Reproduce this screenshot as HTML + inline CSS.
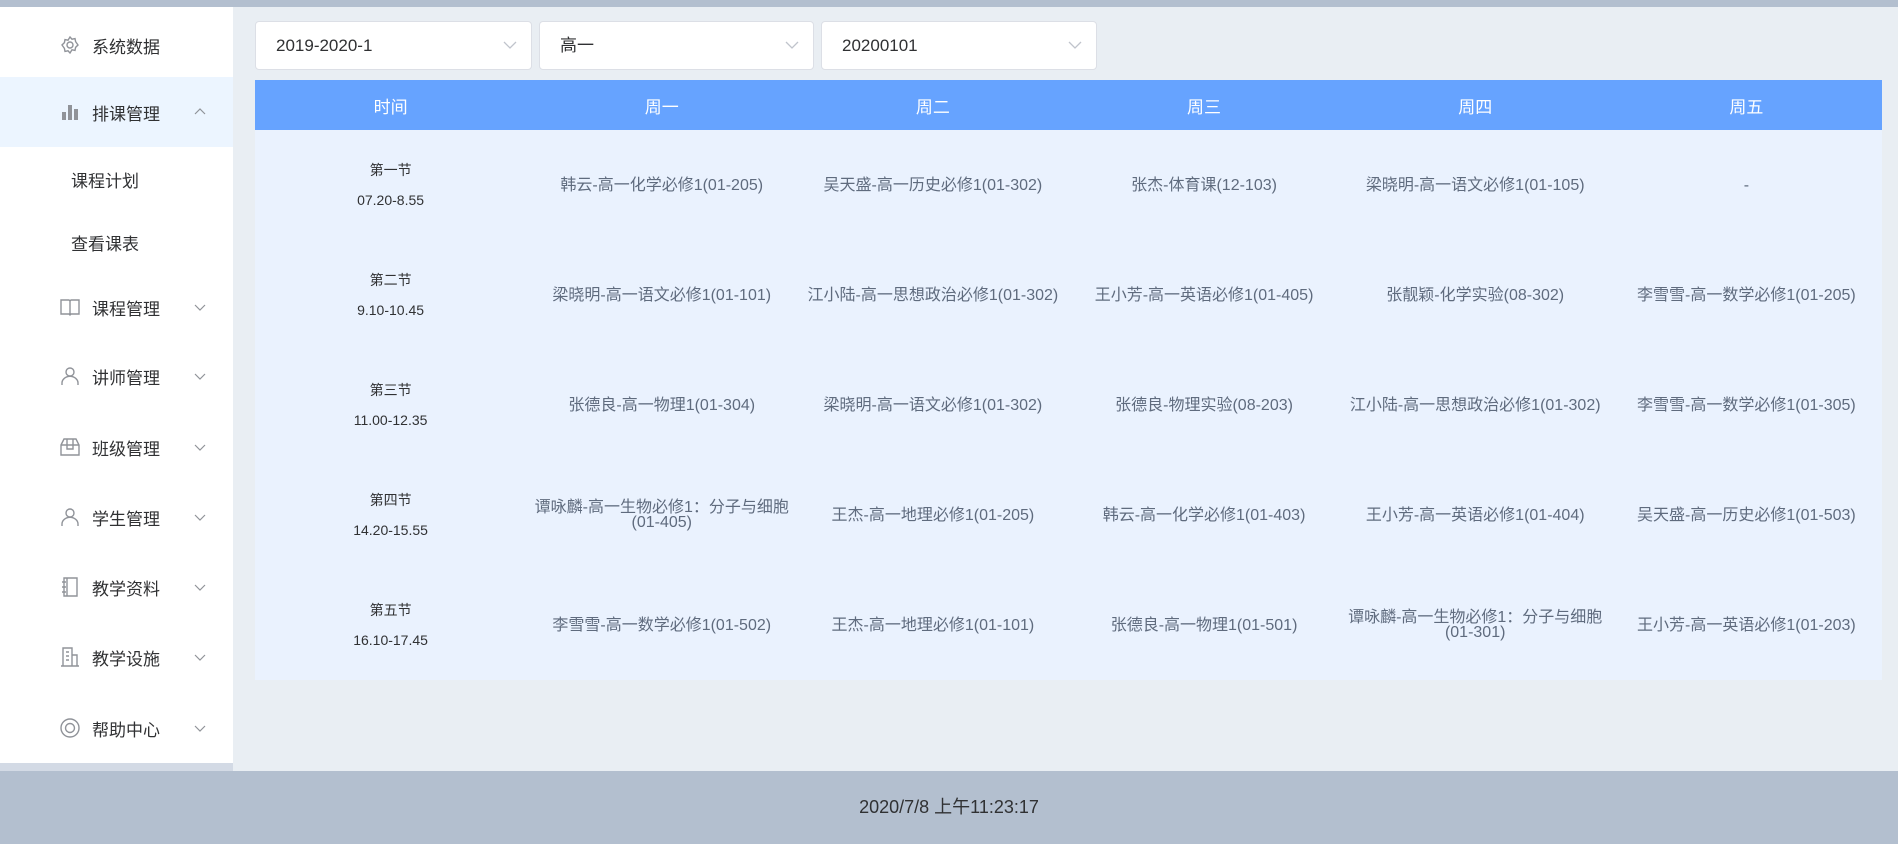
<!DOCTYPE html>
<html><head><meta charset="utf-8">
<style>
*{margin:0;padding:0;box-sizing:border-box}
body{width:1898px;height:844px;overflow:hidden;background:#e9eef3;font-family:"Liberation Sans","Noto Sans CJK SC",sans-serif;position:relative}
.top{position:absolute;left:0;top:0;width:1898px;height:7px;background:#b3bfcf}
.side{position:absolute;left:0;top:7px;width:233px;height:756px;background:#fff}
.sidestrip{position:absolute;left:0;top:763px;width:233px;height:8px;background:#d3dae5}
.item{position:absolute;left:0;width:233px;height:70px;display:flex;align-items:center;font-size:17px;color:#303133}
.item svg.ic{position:absolute;left:60px;top:50%;margin-top:-10px;width:20px;height:20px}
.item .t{position:absolute;left:92px}
.item .ar{position:absolute;left:194px;top:50%;margin-top:-5px;width:12px;height:10px}
.sub{position:absolute;left:71px;font-size:17px;color:#303133}
.foot{position:absolute;left:0;top:771px;width:1898px;height:73px;background:#b3bfcf;text-align:center;line-height:73px;font-size:18px;color:#303133}
.sel{position:absolute;top:21px;height:49px;background:#fff;border:1px solid #dcdfe6;border-radius:4px;font-size:17px;color:#303133;line-height:47px;padding-left:20px}
.sel svg{position:absolute;right:14px;top:19px}
table{position:absolute;left:255px;top:80px;width:1627px;border-collapse:collapse;table-layout:fixed}
th{height:50px;background:#66a3ff;color:#fff;font-weight:normal;font-size:17px}
td{height:110px;background:#eaf2fe;text-align:center;font-size:16px;color:#5f6b7e;line-height:15px;padding:0 6px}
td.tm{color:#303133;font-size:14px;line-height:30px}
</style></head><body>
<div class="top"></div>
<div class="side">
<div class="item" style="top:3px"><svg class="ic" viewBox="0 0 20 20" fill="none" stroke="#909399" stroke-width="1.4"><circle cx="10" cy="10" r="3"/><path d="M10 2l2 2.2 3-.6.6 3L18 10l-2.4 2.4-.6 3-3-.6L10 18l-2-2.2-3 .6-.6-3L2 10l2.4-2.4.6-3 3 .6z"/></svg><span class="t">系统数据</span></div>
<div class="item" style="top:70px;background:#ecf5ff"><svg class="ic" viewBox="0 0 20 20" fill="#909399"><rect x="2" y="10" width="4" height="8"/><rect x="8" y="3" width="4" height="15"/><rect x="14" y="7" width="4" height="11"/></svg><span class="t">排课管理</span><svg class="ar" viewBox="0 0 12 10" fill="none" stroke="#909399" stroke-width="1.2"><path d="M1 7l5-5 5 5"/></svg></div>
<div class="sub" style="top:160px">课程计划</div>
<div class="sub" style="top:223px">查看课表</div>
<div class="item" style="top:265px"><svg class="ic" viewBox="0 0 20 20" fill="none" stroke="#909399" stroke-width="1.4"><path d="M1 3h8l1 1 1-1h8v14h-8l-1 1-1-1H1zM10 4v14"/></svg><span class="t">课程管理</span><svg class="ar" viewBox="0 0 12 10" fill="none" stroke="#909399" stroke-width="1.2"><path d="M1 3l5 5 5-5"/></svg></div>
<div class="item" style="top:334px"><svg class="ic" viewBox="0 0 20 20" fill="none" stroke="#909399" stroke-width="1.4"><circle cx="10" cy="6" r="4"/><path d="M2 19v-2a6 5 0 0 1 16 0v2"/></svg><span class="t">讲师管理</span><svg class="ar" viewBox="0 0 12 10" fill="none" stroke="#909399" stroke-width="1.2"><path d="M1 3l5 5 5-5"/></svg></div>
<div class="item" style="top:405px"><svg class="ic" viewBox="0 0 20 20" fill="none" stroke="#909399" stroke-width="1.4"><path d="M1 8l3-6h12l3 6v10H1zM1 8h18M7 2v10h6V2"/></svg><span class="t">班级管理</span><svg class="ar" viewBox="0 0 12 10" fill="none" stroke="#909399" stroke-width="1.2"><path d="M1 3l5 5 5-5"/></svg></div>
<div class="item" style="top:475px"><svg class="ic" viewBox="0 0 20 20" fill="none" stroke="#909399" stroke-width="1.4"><circle cx="10" cy="6" r="4"/><path d="M2 19v-2a6 5 0 0 1 16 0v2"/></svg><span class="t">学生管理</span><svg class="ar" viewBox="0 0 12 10" fill="none" stroke="#909399" stroke-width="1.2"><path d="M1 3l5 5 5-5"/></svg></div>
<div class="item" style="top:545px"><svg class="ic" viewBox="0 0 20 20" fill="none" stroke="#909399" stroke-width="1.4"><path d="M4 1h13v18H4zM7 1v18M2 5h4M2 10h4M2 15h4"/></svg><span class="t">教学资料</span><svg class="ar" viewBox="0 0 12 10" fill="none" stroke="#909399" stroke-width="1.2"><path d="M1 3l5 5 5-5"/></svg></div>
<div class="item" style="top:615px"><svg class="ic" viewBox="0 0 20 20" fill="none" stroke="#909399" stroke-width="1.4"><path d="M1 19h18M3 19V1h9v18M12 8h5v11M6 5h3M6 9h3M6 13h3"/></svg><span class="t">教学设施</span><svg class="ar" viewBox="0 0 12 10" fill="none" stroke="#909399" stroke-width="1.2"><path d="M1 3l5 5 5-5"/></svg></div>
<div class="item" style="top:686px"><svg class="ic" viewBox="0 0 20 20" fill="none" stroke="#909399" stroke-width="1.4"><circle cx="10" cy="10" r="9"/><circle cx="10" cy="10" r="4.5"/></svg><span class="t">帮助中心</span><svg class="ar" viewBox="0 0 12 10" fill="none" stroke="#909399" stroke-width="1.2"><path d="M1 3l5 5 5-5"/></svg></div>
</div>
<div class="sidestrip"></div>
<div class="sel" style="left:255px;width:277px">2019-2020-1<svg width="14" height="9" viewBox="0 0 14 9" fill="none" stroke="#c0c4cc" stroke-width="1.3"><path d="M1 1l6 6 6-6"/></svg></div>
<div class="sel" style="left:539px;width:275px">高一<svg width="14" height="9" viewBox="0 0 14 9" fill="none" stroke="#c0c4cc" stroke-width="1.3"><path d="M1 1l6 6 6-6"/></svg></div>
<div class="sel" style="left:821px;width:276px">20200101<svg width="14" height="9" viewBox="0 0 14 9" fill="none" stroke="#c0c4cc" stroke-width="1.3"><path d="M1 1l6 6 6-6"/></svg></div>
<table>
<tr><th>时间</th><th>周一</th><th>周二</th><th>周三</th><th>周四</th><th>周五</th></tr>
<tr><td class="tm">第一节<br>07.20-8.55</td><td>韩云-高一化学必修1(01-205)</td><td>吴天盛-高一历史必修1(01-302)</td><td>张杰-体育课(12-103)</td><td>梁晓明-高一语文必修1(01-105)</td><td>-</td></tr>
<tr><td class="tm">第二节<br>9.10-10.45</td><td>梁晓明-高一语文必修1(01-101)</td><td>江小陆-高一思想政治必修1(01-302)</td><td>王小芳-高一英语必修1(01-405)</td><td>张靓颖-化学实验(08-302)</td><td>李雪雪-高一数学必修1(01-205)</td></tr>
<tr><td class="tm">第三节<br>11.00-12.35</td><td>张德良-高一物理1(01-304)</td><td>梁晓明-高一语文必修1(01-302)</td><td>张德良-物理实验(08-203)</td><td>江小陆-高一思想政治必修1(01-302)</td><td>李雪雪-高一数学必修1(01-305)</td></tr>
<tr><td class="tm">第四节<br>14.20-15.55</td><td>谭咏麟-高一生物必修1：分子与细胞(01-405)</td><td>王杰-高一地理必修1(01-205)</td><td>韩云-高一化学必修1(01-403)</td><td>王小芳-高一英语必修1(01-404)</td><td>吴天盛-高一历史必修1(01-503)</td></tr>
<tr><td class="tm">第五节<br>16.10-17.45</td><td>李雪雪-高一数学必修1(01-502)</td><td>王杰-高一地理必修1(01-101)</td><td>张德良-高一物理1(01-501)</td><td>谭咏麟-高一生物必修1：分子与细胞(01-301)</td><td>王小芳-高一英语必修1(01-203)</td></tr>
</table>
<div class="foot">2020/7/8 上午11:23:17</div>
</body></html>
